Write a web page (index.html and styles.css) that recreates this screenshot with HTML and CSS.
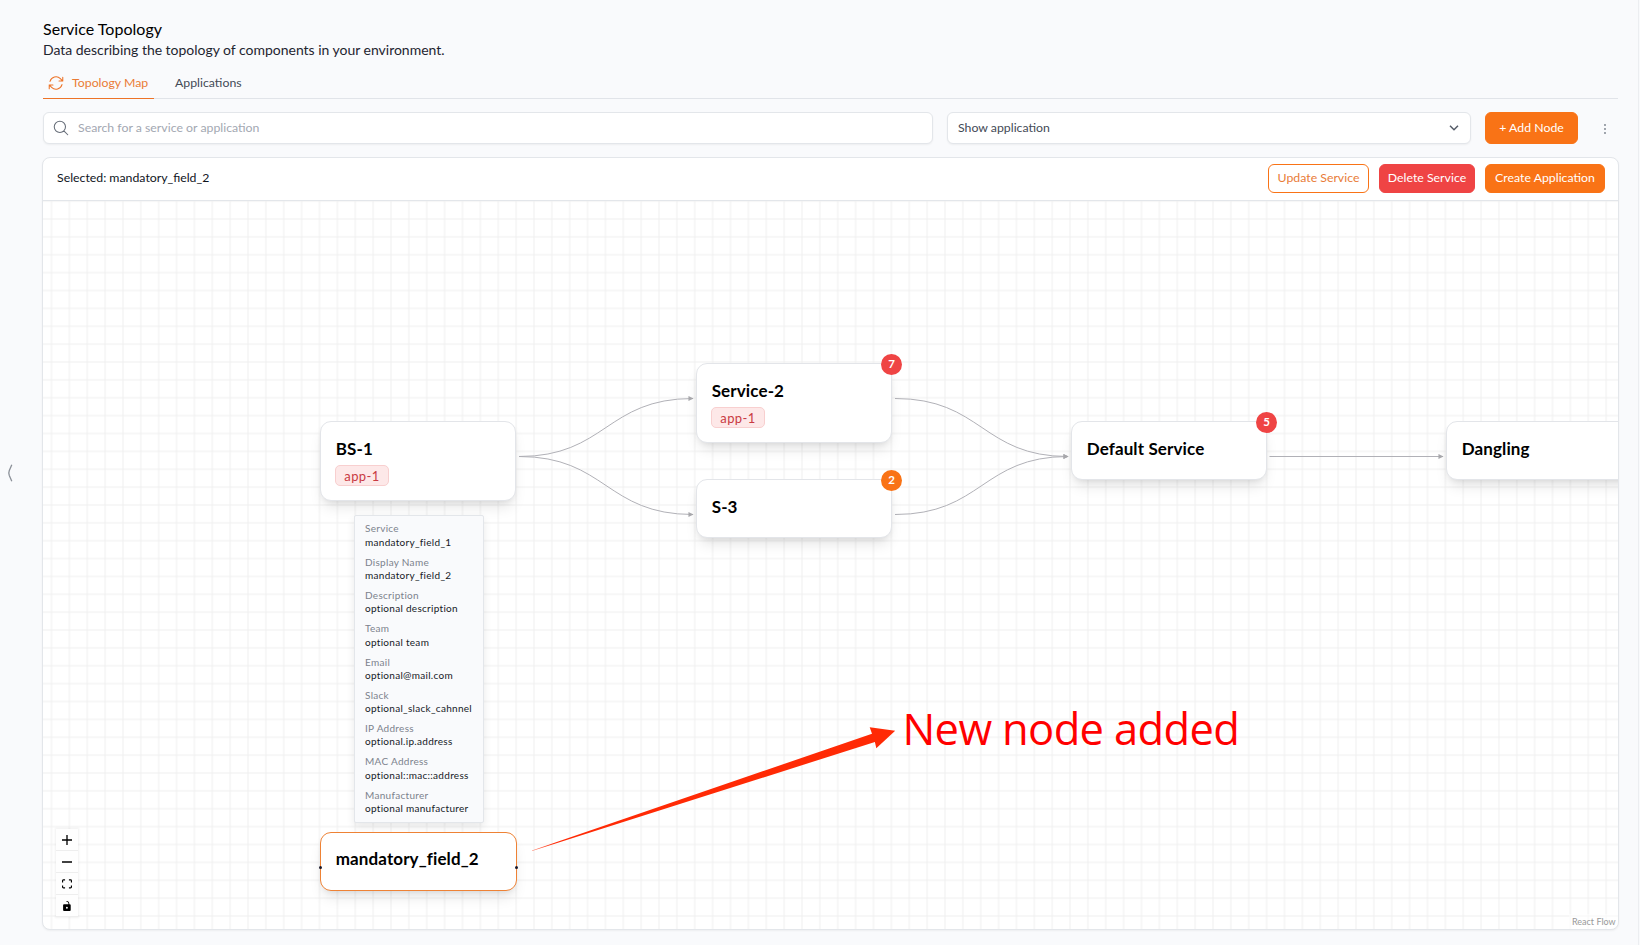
FILE: index.html
```html
<!DOCTYPE html>
<html lang="en">
<head>
<meta charset="utf-8">
<title>Service Topology</title>
<link rel="stylesheet" href="styles.css">
</head>
<body>
<main class="page">
  <svg class="collapse" viewBox="0 0 6 18"><path d="M4.800 .800 2.300 6.500Q1.300 9 2.300 11.500L4.800 17.200"/></svg>
  <h1 class="title">Service Topology</h1>
  <p class="subtitle">Data describing the topology of components in your environment.</p>
  <nav class="tabs">
    <a class="tab tab-active"><svg class="tab-icon" viewBox="0 0 24 24"><path d="M16.023 9.348h4.992V4.356M2.985 19.644v-4.992h4.992M2.985 14.652l3.181 3.183a8.25 8.25 0 0 0 13.803-3.7M4.031 9.865a8.25 8.25 0 0 1 13.803-3.7l3.181 3.182"/></svg><span>Topology Map</span></a>
    <a class="tab">Applications</a>
  </nav>
  <div class="toolbar">
    <div class="field search"><svg class="search-icon" viewBox="0 0 24 24"><path d="m21 21-5.197-5.197M15.803 15.803A7.5 7.5 0 1 0 5.196 5.196a7.5 7.5 0 0 0 10.607 10.607Z"/></svg><span class="placeholder">Search for a service or application</span></div>
    <div class="field select"><span>Show application</span><svg class="chevron" viewBox="0 0 10 6"><path d="M1 .8 5 4.8 9 .8"/></svg></div>
    <button class="btn btn-add">+ Add Node</button>
    <svg class="dots" viewBox="0 0 4 12"><circle cx="2" cy="2" r=".9"/><circle cx="2" cy="6" r=".9"/><circle cx="2" cy="10" r=".9"/></svg>
  </div>
  <section class="panel">
    <header class="panel-head">
      <span class="selected-text">Selected: mandatory_field_2</span>
      <button class="btn btn-update">Update Service</button>
      <button class="btn btn-delete">Delete Service</button>
      <button class="btn btn-create">Create Application</button>
    </header>
    <div class="canvas">
      <svg class="layer" width="1575" height="728">
        <defs>
          <pattern id="grid" x="17.400" y="9.100" width="17.870" height="17.870" patternUnits="userSpaceOnUse"><path d="M8.935 0V17.870M0 8.935H17.870" stroke="#f0f0f0" stroke-width="1.100"/></pattern>
          <marker id="tip" viewBox="0 0 6 6" refX="5" refY="3" markerWidth="5.500" markerHeight="5.500" markerUnits="userSpaceOnUse"><path d="M0 .3 5.600 3 0 5.700Z" fill="#a9a9ad"/></marker>
        </defs>
        <rect width="1575" height="728" fill="url(#grid)"/>
        <g class="edges">
          <path d="M476 255.500C563 255.500 563 197.500 650 197.500"/>
          <path d="M476 255.500C563 255.500 563 313.500 650 313.500"/>
          <path d="M852 197.500C939 197.500 939 255.500 1025 255.500"/>
          <path d="M852 313.500C939 313.500 939 255.500 1025 255.500"/>
          <path d="M1226.500 255.500H1400"/>
        </g>
      </svg>
      <article class="node node-bs"><h2>BS-1</h2><span class="tag">app-1</span></article>
      <article class="node node-s2"><h2>Service-2</h2><span class="tag">app-1</span><b class="badge">7</b></article>
      <article class="node node-s3"><h2>S-3</h2><b class="badge badge-orange">2</b></article>
      <article class="node node-default"><h2>Default Service</h2><b class="badge">5</b></article>
      <article class="node node-dangling"><h2>Dangling</h2></article>
      <dl class="details">
        <dt>Service</dt><dd>mandatory_field_1</dd>
        <dt>Display Name</dt><dd>mandatory_field_2</dd>
        <dt>Description</dt><dd>optional description</dd>
        <dt>Team</dt><dd>optional team</dd>
        <dt>Email</dt><dd>optional@mail.com</dd>
        <dt>Slack</dt><dd>optional_slack_cahnnel</dd>
        <dt>IP Address</dt><dd>optional.ip.address</dd>
        <dt>MAC Address</dt><dd>optional::mac::address</dd>
        <dt>Manufacturer</dt><dd>optional manufacturer</dd>
      </dl>
      <article class="node node-selected"><i class="handle handle-left"></i><h2>mandatory_field_2</h2><i class="handle handle-right"></i></article>
      <svg class="layer" width="1575" height="728">
        <defs><linearGradient id="fade" x1="0" x2="1"><stop offset="0" stop-color="#ff2a05" stop-opacity=".6"/><stop offset=".06" stop-color="#ff2a05"/></linearGradient></defs>
        <path fill="url(#fade)" d="M489 649.600 829 532.700 826.700 526.300 852.200 529.800 833.300 547.300 831.900 541 489 650.100Z"/>
      </svg>
      <span class="note">New node added</span>
      <div class="controls">
        <span><svg viewBox="0 0 32 32"><path d="M32 18.133H18.133V32h-4.266V18.133H0v-4.266h13.867V0h4.266v13.867H32z"/></svg></span>
        <span><svg viewBox="0 0 32 32"><path d="M0 13.800h32v4.400H0z"/></svg></span>
        <span><svg viewBox="0 0 32 30"><path d="M3.692 4.630c0-.530.400-.938.939-.938h5.215V0H4.708C2.130 0 0 2.054 0 4.630v5.216h3.692V4.631zM27.354 0h-5.200v3.692h5.170c.530 0 .984.400.984.939v5.215H32V4.631A4.624 4.624 0 0 0 27.354 0zm.954 24.830c0 .532-.400.940-.939.940h-5.215v3.768h5.215c2.577 0 4.631-2.130 4.631-4.707v-5.139h-3.692v5.139zm-23.677.940a.919.919 0 0 1-.939-.940v-5.138H0v5.139c0 2.577 2.130 4.707 4.708 4.707h5.138V25.770H4.631z"/></svg></span>
        <span><svg viewBox="0 0 25 32"><path d="M21.333 10.667H19.810V7.619C19.810 3.429 16.380 0 12.190 0c-4.114 1.828-1.370 2.133.305 2.438 1.676.305 4.420 2.590 4.420 5.181v3.048H3.047A3.056 3.056 0 0 0 0 13.714v15.238A3.056 3.056 0 0 0 3.048 32h18.285a3.056 3.056 0 0 0 3.048-3.048V13.714a3.056 3.056 0 0 0-3.048-3.047zM12.190 24.533a3.056 3.056 0 0 1-3.047-3.047 3.056 3.056 0 0 1 3.048-3.048 3.056 3.056 0 0 1 3.048 3.048 3.056 3.056 0 0 1-3.048 3.047z"/></svg></span>
      </div>
      <span class="attribution">React Flow</span>
    </div>
  </section>
</main>
</body>
</html>
```
FILE: styles.css
```css
* { box-sizing: border-box; }
body { margin: 0; background: #f9fafc; font-family: Lato, "Open Sans", sans-serif; color: #000; }
.page { position: relative; height: 945px; width: 1639px; padding: 18px 20px 0 43px; border-right: 1px solid #eceef1; overflow: hidden; }
.collapse { position: absolute; left: 6.500px; top: 464px; width: 6px; height: 18px; fill: none; stroke: #8b9098; stroke-width: 1.300; }
.title { margin: 0; font-size: 16px; font-weight: 400; line-height: 22px; letter-spacing: .03px; }
.subtitle { margin: 0; font-size: 14px; line-height: 20px; letter-spacing: -.02px; color: #1f2530; }
.tabs { display: flex; height: 31px; margin-top: 8px; gap: 21px; border-bottom: 1px solid #e1e4e9; font-size: 12.300px; }
.tab { display: flex; align-items: center; height: 31px; padding-bottom: 3px; color: #434a56; }
.tab-active { width: 111px; padding: 0 0 0 4px; gap: 7px; color: #ea7c36; border-bottom: 1px solid #ed7327; }
.tab-active span { padding-bottom: 2px; }
.tab-icon { width: 18px; height: 18px; fill: none; stroke: #ed7327; stroke-width: 1.400; stroke-linecap: round; stroke-linejoin: round; }
.toolbar { display: flex; align-items: center; height: 32px; margin-top: 13px; }
.field { display: flex; align-items: center; height: 32px; background: #fff; border: 1px solid #e3e6ea; border-radius: 6px; box-shadow: 0 1px 2px rgba(0,0,0,.05); font-size: 12.300px; }
.field span { padding-bottom: 2px; }
.search { width: 890px; padding-left: 8px; }
.search-icon { width: 18px; height: 18px; margin-right: 8px; fill: none; stroke: #666d78; stroke-width: 1.400; stroke-linecap: round; }
.placeholder { color: #a3a8b2; }
.select { width: 524px; margin-left: 14px; padding: 0 11px 0 10px; justify-content: space-between; color: #434a56; }
.chevron { width: 10px; height: 6px; fill: none; stroke: #555c68; stroke-width: 1.500; }
.btn { height: 29px; padding: 0 0 2px; border: 1px solid #f97316; border-radius: 6px; background: #f97316; color: #fff; font: 400 12.300px/25px Lato, "Open Sans", sans-serif; white-space: nowrap; }
.btn-add { width: 93px; height: 32px; margin-left: 14px; }
.dots { width: 4px; height: 12px; margin-left: 24.500px; margin-top: 2px; fill: #777d88; }
.panel { width: 1577px; height: 773px; margin: 13px 0 0 -1px; border: 1px solid #e3e6ea; border-radius: 8px; background: #fff; box-shadow: 0 1px 2px rgba(0,0,0,.05); overflow: hidden; }
.panel-head { display: flex; align-items: center; height: 43px; padding: 0 13px 2px 14px; border-bottom: 1px solid #e3e6ea; font-size: 12.300px; }
.selected-text { margin-right: auto; padding-bottom: 2px; color: #10151d; }
.btn-update { width: 101px; background: #fff; color: #e97c38; }
.btn-delete { width: 96px; margin: 0 10px; border-color: #ef4444; background: #ef4444; }
.btn-create { width: 120px; }
.canvas { position: relative; height: 728px; overflow: hidden; }
.layer { position: absolute; left: 0; top: 0; }
.edges path { fill: none; stroke: #b1b1b7; stroke-width: 1; marker-end: url(#tip); }
.node { position: absolute; width: 196px; height: 59px; padding: 16px 14px; border: 1px solid #e3e5e9; border-radius: 11px; background: #fff; box-shadow: 0 9px 14px -3px rgba(0,0,0,.1), 0 3px 6px -3px rgba(0,0,0,.1); }
.node h2 { margin: 0; padding-left: .7px; font-size: 17px; line-height: 22px; font-weight: 700; letter-spacing: .12px; white-space: nowrap; }
.node-bs { left: 277px; top: 220px; height: 80px; }
.node-s2 { left: 653px; top: 162px; height: 80px; }
.node-s3 { left: 653px; top: 278px; }
.node-default { left: 1028px; top: 220px; }
.node-dangling { left: 1403px; top: 220px; }
.node-selected { left: 277px; top: 631px; width: 197px; border-color: #ee8235; }
.node-selected h2 { margin-top: -1px; }
.tag { display: block; width: 54px; height: 21px; margin-top: 5px; border: 1px solid #f8cfcf; border-radius: 5px; background: #fde8e8; color: #c93a43; font-size: 13px; letter-spacing: .4px; line-height: 20px; text-align: center; }
.badge { position: absolute; right: -11px; top: -10.500px; width: 21px; height: 21px; border-radius: 50%; background: #ef4444; color: #fff; font-size: 11.500px; line-height: 20px; text-align: center; }
.badge-orange { background: #f97316; }
.handle { position: absolute; top: 33px; width: 3px; height: 3px; border-radius: 50%; background: #1a192b; }
.handle-left { left: -2px; }
.handle-right { right: -2px; }
.details { position: absolute; left: 311px; top: 314px; width: 130px; height: 308px; margin: 0; padding: 6.400px 10px; border: 1px solid #e3e6ea; border-radius: 2px; background: #f9fafc; box-shadow: 0 4px 8px rgba(0,0,0,.09); font-size: 10px; letter-spacing: .29px; line-height: 13.300px; white-space: nowrap; }
.details dt { height: 13.400px; color: #7c828c; }
.details dd { height: 13.300px; margin: 0 0 6.600px; color: #15191f; }
.note { position: absolute; left: 859.500px; top: 496px; color: #f00; font: 43.500px/64px "Open Sans", "Noto Sans", sans-serif; letter-spacing: -.65px; white-space: nowrap; }
.controls { position: absolute; left: 13px; top: 628px; width: 22px; box-shadow: 0 0 2px 1px rgba(0,0,0,.06); }
.controls span { display: flex; align-items: center; justify-content: center; height: 22px; background: #fefefe; border-bottom: 1px solid #eee; }
.controls svg { width: 10px; height: 10px; }
.attribution { position: absolute; right: 0; bottom: 0; width: 49px; height: 15px; padding-left: 3px; background: rgba(255,255,255,.5); color: #999; font-size: 9px; line-height: 15px; white-space: nowrap; }
```
